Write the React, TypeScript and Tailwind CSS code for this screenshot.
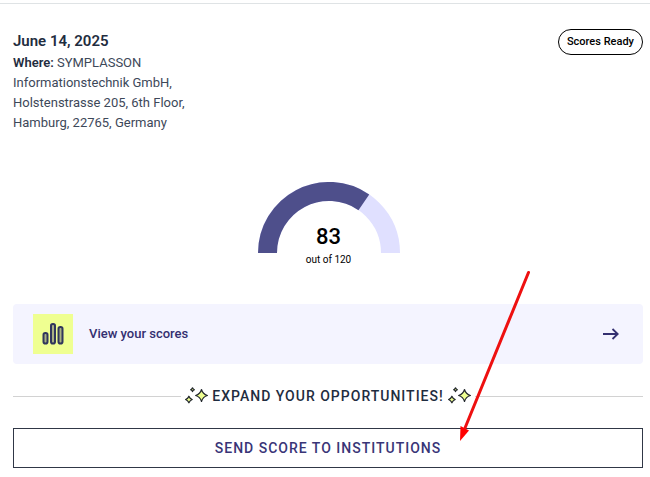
import React from 'react';

interface ScoreGaugeProps {
	score: number;
	total: number;
}

const RADIUS = 61.5;

const ScoreGauge: React.FC<ScoreGaugeProps> = ({ score, total }) => {
	const angle = Math.PI * (1 - score / total);
	const x = 71 + RADIUS * Math.cos(angle);
	const y = 71 - RADIUS * Math.sin(angle);

	return (
		<div className="grid justify-items-center">
			<svg
				width="142"
				height="71"
				viewBox="0 0 142 71"
				fill="none"
				strokeWidth="19"
				className="col-start-1 row-start-1"
				aria-hidden="true"
			>
				<path d={`M9.5 71A${RADIUS} ${RADIUS} 0 0 1 132.5 71`} stroke="#e0e0ff" />
				<path
					d={`M9.5 71A${RADIUS} ${RADIUS} 0 0 1 ${x} ${y}`}
					stroke="#4e4f8b"
				/>
			</svg>
			<div className="col-start-1 row-start-1 flex flex-col items-center pt-10 text-black">
				<span className="text-[22px] leading-[30px] font-medium">{score}</span>
				<span className="text-[10px] leading-4">out of {total}</span>
			</div>
		</div>
	);
};

const BarsIcon = () => (
	<svg
		width="24"
		height="24"
		viewBox="0 0 24 24"
		fill="#a9b183"
		stroke="#30365c"
		strokeWidth="2"
		aria-hidden="true"
	>
		<rect x="2.5" y="11" width="4" height="10.5" rx="1.8" />
		<rect x="10" y="2" width="4" height="19.5" rx="1.8" />
		<rect x="17.5" y="5" width="4" height="16.5" rx="1.8" />
	</svg>
);

const ArrowIcon = () => (
	<svg
		width="16"
		height="12"
		viewBox="0 0 16 12"
		fill="none"
		stroke="#332f70"
		strokeWidth="1.8"
		aria-hidden="true"
	>
		<path d="M0 6H15M9.5 1L14.7 6L9.5 11" />
	</svg>
);

const Sparkles = () => (
	<svg
		width="23"
		height="18"
		viewBox="0 0 23 18"
		fill="#efff91"
		stroke="#22272c"
		strokeWidth="1.2"
		strokeLinejoin="round"
		className="shrink-0"
		aria-hidden="true"
	>
		<path d="M16.5 2.5Q17.8 7.2 22.4 8.5Q17.8 9.8 16.5 14.5Q15.2 9.8 10.6 8.5Q15.2 7.2 16.5 2.5Z" />
		<path d="M3.9 9.2Q4.8 11.6 7.2 12.5Q4.8 13.4 3.9 15.8Q3 13.4 .6 12.5Q3 11.6 3.9 9.2Z" />
		<path d="M7.5 .8Q8 2.2 9.4 2.7Q8 3.2 7.5 4.6Q7 3.2 5.6 2.7Q7 2.2 7.5 .8Z" />
	</svg>
);

const PointerArrow = () => (
	<svg
		width="74"
		height="173"
		viewBox="0 0 74 173"
		className="pointer-events-none absolute top-[270px] left-[70.5%]"
		aria-hidden="true"
	>
		<path
			d="M70.5 2.5L7 158"
			stroke="#ee1010"
			strokeWidth="3"
			strokeLinecap="round"
		/>
		<path d="M2 171L2.5 156L11 160.5Z" fill="#ff0000" />
	</svg>
);

export default function App() {
	return (
		<div className="relative bg-white pt-[3px] font-['Roboto','Liberation_Sans',sans-serif] text-[#1f2d40]">
			<main className="border-t border-[#dfe3e5] pr-[7px] pb-2 pl-[13px]">
				<header className="flex items-start justify-between pt-[25px]">
					<div>
						<h1 className="text-[15px] leading-6 font-semibold">June 14, 2025</h1>
						<p className="max-w-[180px] text-[13px] leading-5 text-[#3d4859]">
							<b className="font-semibold text-[#1f2d40]">Where:</b> SYMPLASSON
							Informationstechnik GmbH, Holstenstrasse 205, 6th Floor, Hamburg,
							22765, Germany
						</p>
					</div>
					<span className="rounded-full border border-black px-2 text-[11px] leading-6 font-medium text-black">
						Scores Ready
					</span>
				</header>

				<section className="mt-[49px] pl-px">
					<ScoreGauge score={83} total={120} />
				</section>

				<a
					href="#scores"
					className="mt-9 flex h-[60px] items-center rounded bg-[#f4f4ff] px-5 text-[13px] font-medium text-[#332f70]"
				>
					<span className="grid size-10 place-items-center bg-[#efff91]">
						<BarsIcon />
					</span>
					<span className="ml-4">View your scores</span>
					<span className="mr-1 ml-auto">
						<ArrowIcon />
					</span>
				</a>

				<div className="mt-5 flex items-center gap-1">
					<span className="h-px flex-1 bg-[#d2d2d2]" />
					<Sparkles />
					<h2 className="text-sm leading-6 font-medium tracking-[1px]">
						EXPAND YOUR OPPORTUNITIES!
					</h2>
					<Sparkles />
					<span className="h-px flex-1 bg-[#d2d2d2]" />
				</div>

				<button
					type="button"
					className="mt-5 h-10 w-full border border-[#303746] text-sm font-medium tracking-[1px] text-[#393577]"
				>
					SEND SCORE TO INSTITUTIONS
				</button>
			</main>
			<PointerArrow />
		</div>
	);
}
